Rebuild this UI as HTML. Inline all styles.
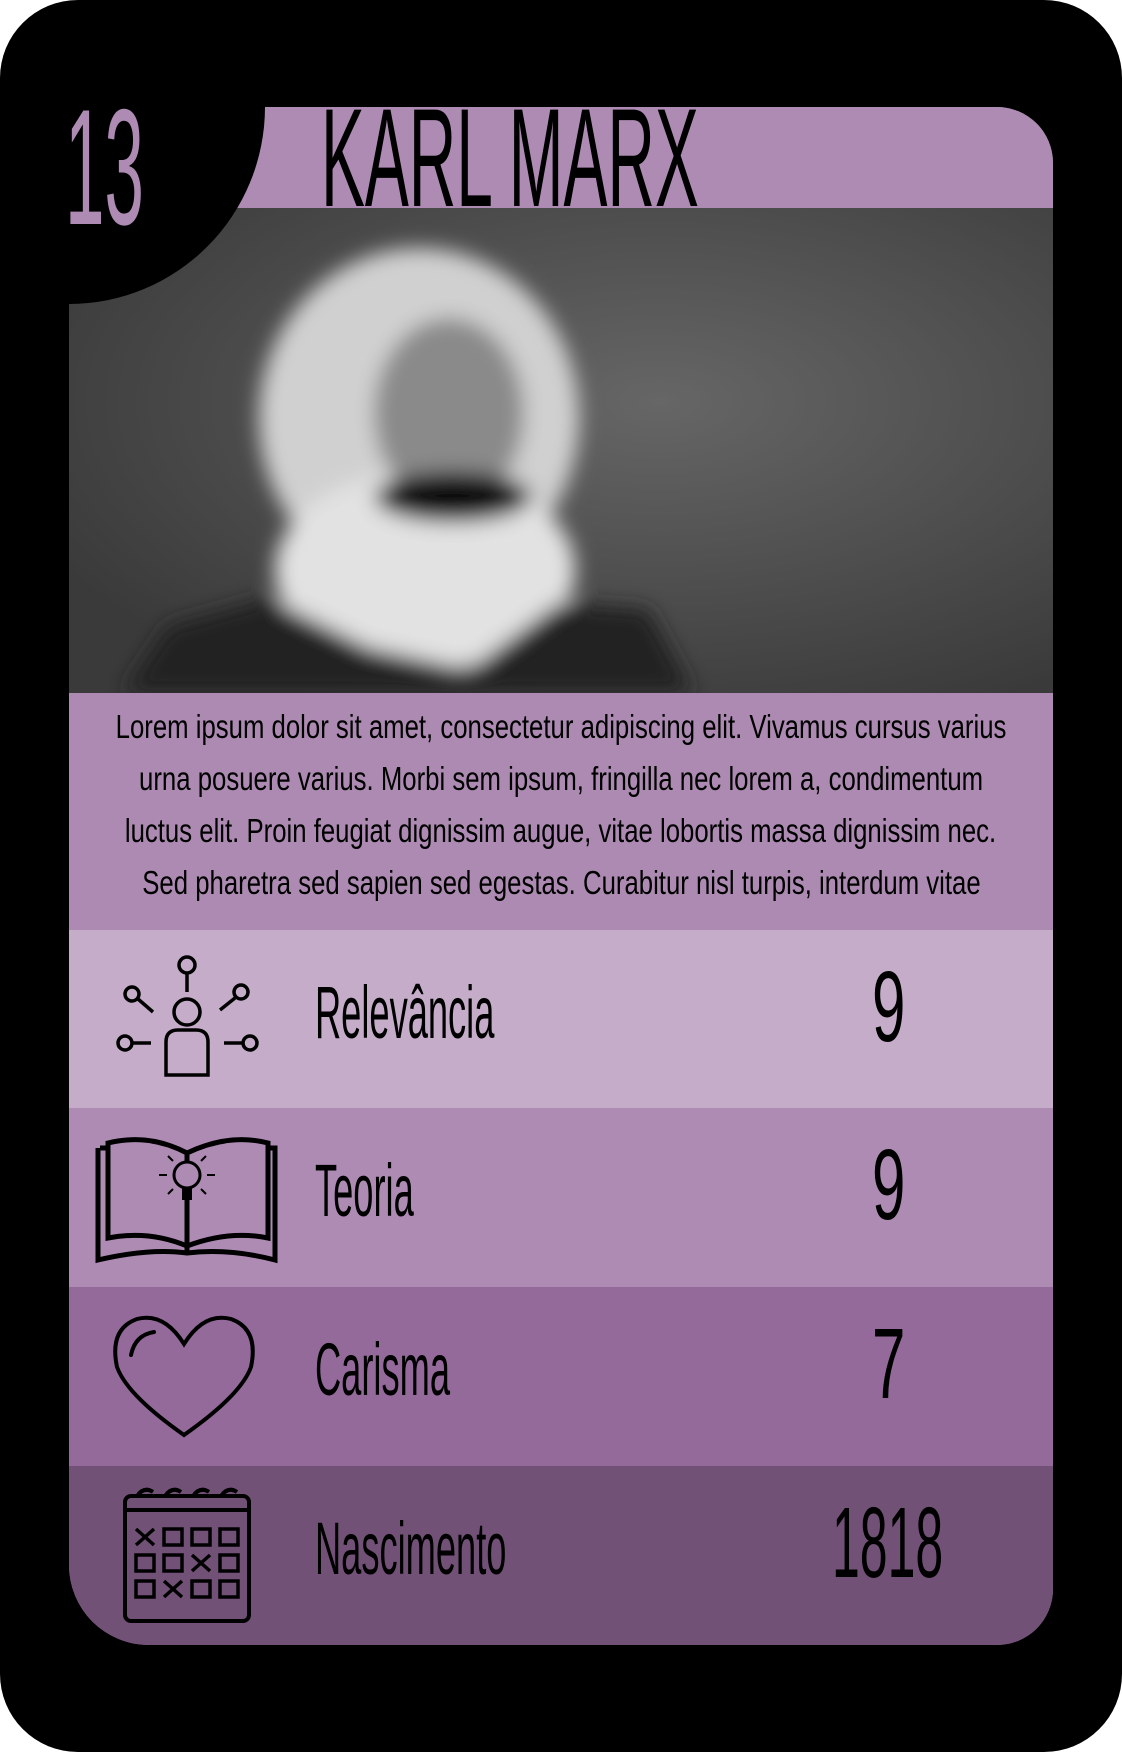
<!DOCTYPE html>
<html><head><meta charset="utf-8"><style>
*{margin:0;padding:0;box-sizing:border-box}
body{width:1122px;height:1752px;background:#fff;position:relative;overflow:hidden;font-family:"Liberation Sans Narrow","Liberation Sans",sans-serif}
.card{position:absolute;left:0;top:0;width:1122px;height:1752px;background:#000;border-radius:78px}
.panel{position:absolute;left:69px;top:107px;width:984px;height:1538px;border-radius:0 56px 56px 80px;overflow:hidden;background:#ac8ab2}
.title{position:absolute;left:0;top:0;width:984px;height:101px;background:#ad8bb3}
.photo{position:absolute;left:0;top:101px;width:984px;height:485px}
.desc{position:absolute;left:0;top:586px;width:984px;height:237px;background:#ac8ab2;font-size:33px;line-height:52px;padding-top:8px;color:#000}
.desc div{display:flex;justify-content:center;width:984px}
.desc span{display:inline-block;transform:scaleX(.78);white-space:nowrap;transform-origin:center;flex:none}
.row{position:absolute;left:0;width:984px;height:179px}
.lab{position:absolute;left:246px;font-size:74px;transform:scaleX(.49);transform-origin:left;white-space:nowrap}
.val{position:absolute;font-size:100px;transform:scaleX(.6);transform-origin:left;white-space:nowrap}
.blk{position:absolute;left:0;top:0;width:196px;height:197px;background:#000;border-bottom-right-radius:196px 197px}
</style></head><body>
<div class="card"></div>
<div class="panel">
<div class="title"></div>
<div class="photo"><svg width="984" height="485" viewBox="0 0 984 485">
<defs><radialGradient id="bg" cx="0.6" cy="0.4" r="0.7"><stop offset="0" stop-color="#666"/><stop offset="1" stop-color="#3a3a3a"/></radialGradient>
<filter id="bl"><feGaussianBlur stdDeviation="10"/></filter></defs>
<rect width="984" height="485" fill="url(#bg)"/>
<g filter="url(#bl)">
<ellipse cx="350" cy="210" rx="160" ry="170" fill="#d0d0d0"/>
<ellipse cx="356" cy="362" rx="150" ry="100" fill="#e2e2e2"/>
<ellipse cx="380" cy="205" rx="75" ry="95" fill="#8a8a8a"/>
<ellipse cx="384" cy="289" rx="78" ry="25" fill="#111"/>
<path d="M54 485 L99 418 L199 390 L300 440 L400 462 L490 395 L579 401 L624 485Z" fill="#222"/>
</g>
</svg></div>
<div class="blk"></div>
<div style="position:absolute;left:-4px;top:-34px;font-size:165px;color:#ad8bb3;transform:scaleX(.43);transform-origin:left">13</div>
<div style="position:absolute;left:252px;top:-30px;font-size:140px;color:#000;transform:scaleX(.47);transform-origin:left;white-space:nowrap">KARL MARX</div>
<div class="desc"><div><span>Lorem ipsum dolor sit amet, consectetur adipiscing elit. Vivamus cursus varius</span></div><div><span>urna posuere varius. Morbi sem ipsum, fringilla nec lorem a, condimentum</span></div><div><span>luctus elit. Proin feugiat dignissim augue, vitae lobortis massa dignissim nec.</span></div><div><span>Sed pharetra sed sapien sed egestas. Curabitur nisl turpis, interdum vitae</span></div></div>

<div class="row" style="top:823px;background:#c5adc9">
<svg style="position:absolute;left:0;top:0" width="240" height="179" viewBox="0 0 240 179" fill="none" stroke="#000" stroke-width="3.5">
<circle cx="118" cy="35" r="8"/><line x1="118" y1="43" x2="118" y2="62"/>
<circle cx="118" cy="82" r="13"/><path d="M97 145 V112 Q97 100 109 100 H127 Q139 100 139 112 V145Z"/>
<circle cx="63" cy="64" r="7"/><line x1="69" y1="69" x2="84" y2="82"/>
<circle cx="172" cy="62" r="7"/><line x1="166" y1="68" x2="151" y2="80"/>
<circle cx="56" cy="113" r="7"/><line x1="63" y1="113" x2="82" y2="113"/>
<circle cx="181" cy="113" r="7"/><line x1="174" y1="113" x2="155" y2="113"/>
</svg>
<div class="lab" style="top:40px">Relevância</div>
<div class="val" style="left:803px;top:20px">9</div></div>

<div class="row" style="top:1001px;background:#ad8bb3">
<svg style="position:absolute;left:0;top:0" width="240" height="179" viewBox="0 0 240 179" fill="none" stroke="#000" stroke-width="5">
<path d="M31 40 H39 M29 40 V152 Q80 140 118 145 Q160 140 206 152 V40 H199"/>
<path d="M39 35 Q80 25 118 45 Q160 25 199 35 V130 Q160 122 118 138 Q80 122 39 130Z"/>
<line x1="118" y1="45" x2="118" y2="145"/>
<circle cx="118" cy="67" r="13" stroke-width="3" fill="#ad8bb3"/><rect x="113" y="80" width="10" height="12" fill="#000" stroke="none"/>
<path d="M98 67 H90 M138 67 H146 M104 53 L99 48 M132 53 L137 48 M104 81 L99 86 M132 81 L137 86" stroke-width="2"/>
</svg>
<div class="lab" style="top:40px">Teoria</div>
<div class="val" style="left:803px;top:20px">9</div></div>

<div class="row" style="top:1180px;background:#936a9a">
<svg style="position:absolute;left:0;top:0" width="240" height="179" viewBox="0 0 240 179" fill="none" stroke="#000" stroke-width="4">
<path d="M115 57 Q95 25 68 32 Q40 42 48 80 Q58 108 115 148 Q172 108 182 80 Q190 42 162 32 Q135 25 115 57Z"/>
<path d="M62 68 Q66 48 85 45" stroke-linecap="round"/>
</svg>
<div class="lab" style="top:40px">Carisma</div>
<div class="val" style="left:803px;top:20px">7</div></div>

<div class="row" style="top:1359px;background:#725177">
<svg style="position:absolute;left:0;top:0" width="240" height="179" viewBox="0 0 240 179" fill="none" stroke="#000" stroke-width="4">
<rect x="56" y="30" width="124" height="125" rx="6"/><line x1="56" y1="44" x2="180" y2="44"/>
<path d="M68 30 Q75 20 84 26 M96 30 Q103 20 112 26 M124 30 Q131 20 140 26 M152 30 Q159 20 168 26"/>
<g stroke-width="3.5"><rect x="95" y="63" width="18" height="16"/><rect x="123" y="63" width="18" height="16"/><rect x="151" y="63" width="18" height="16"/>
<rect x="67" y="89" width="18" height="16"/><rect x="95" y="89" width="18" height="16"/><rect x="151" y="89" width="18" height="16"/>
<rect x="67" y="115" width="18" height="16"/><rect x="123" y="115" width="18" height="16"/><rect x="151" y="115" width="18" height="16"/>
<path d="M67 63 L85 79 M85 63 L67 79 M123 89 L141 105 M141 89 L123 105 M95 115 L113 131 M113 115 L95 131"/></g>
</svg>
<div class="lab" style="top:40px">Nascimento</div>
<div class="val" style="left:763px;top:20px;transform:scaleX(.5)">1818</div></div>
</div>
</body></html>
